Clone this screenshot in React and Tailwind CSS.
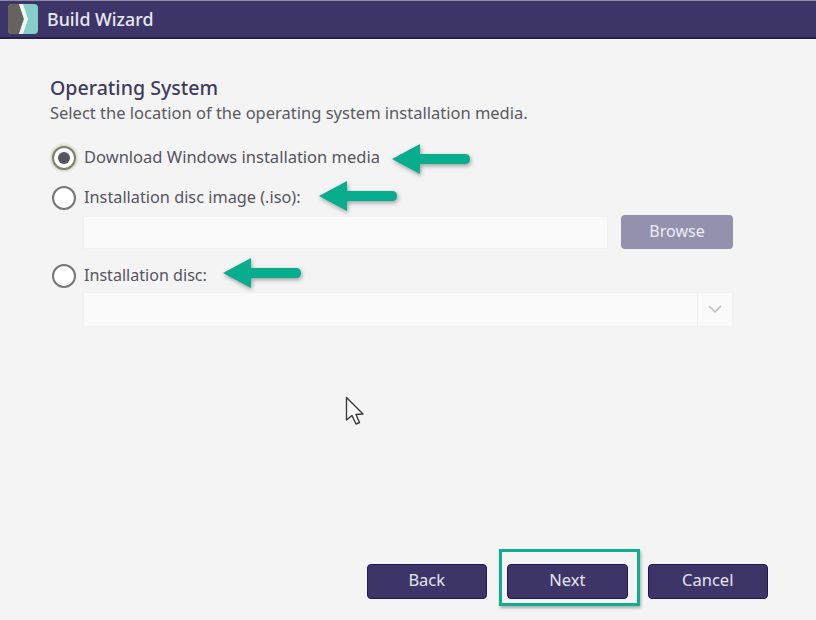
import React from 'react'

const font = { fontFamily: '"Noto Sans", "Open Sans", sans-serif' }

// green annotation arrow, tip on the left
const Arrow = ({ className }) => (
    <svg className={`absolute ${className}`} width="84" height="36" viewBox="0 0 84 36" style={{ filter: 'drop-shadow(1px 2px 2px rgba(0,0,0,0.35))' }}>
        <path d="M2 16 L30 1 L30 11 L75 11 Q80 11 80 16 Q80 21 75 21 L30 21 L30 31 Z" fill="#07ad8c" />
    </svg>
)

const Radio = ({ checked }) => (
    <div className={`w-[24px] h-[24px] rounded-full flex items-center justify-center shrink-0 bg-white border-2 ${checked ? 'border-[#7d7f70] shadow-[0_0_3px_1px_#c9ccab]' : 'border-[#77777b]'}`}>
        {checked && <div className="w-[12px] h-[12px] rounded-full bg-[#55555b]" />}
    </div>
)

const FooterButton = ({ label }) => (
    <button className="w-[120.5px] h-[35px] pb-[3px] rounded-[4px] bg-[#3d3568] border border-[#1e1a50] text-[#e6e6f2] text-[16.5px] leading-[20px]">
        {label}
    </button>
)

const App = () => {
    return (
        <div className="relative w-[816px] h-[620px] overflow-hidden bg-[#f4f4f5] flex flex-col" style={font}>
            <div className="h-[39px] bg-[#3d3568] border-b-2 border-[#26214f] border-t border-t-[#8e8aa2] flex items-center pl-[8px] shrink-0">
                <svg width="30" height="30" viewBox="0 0 30 30">
                    <rect x="0" y="0" width="30" height="30" rx="4" fill="#84cfc8" />
                    <path d="M0 4 Q0 0 4 0 L11 0 L16 15 L11 30 L4 30 Q0 30 0 26 Z" fill="#66625f" />
                    <path d="M11 0 L15 0 L20 15 L15 30 L11 30 L16 15 Z" fill="#f1f5f4" />
                </svg>
                <span className="ml-[9px] text-[17.8px] leading-[24px] text-[#e9e9f4] font-medium">Build Wizard</span>
            </div>

            <div className="pl-[50px] pt-[36px] pr-[83px] flex flex-col">
                <h1 className="text-[19.6px] leading-[26px] font-medium text-[#3f3b5c]">Operating System</h1>
                <p className="text-[16.5px] leading-[22px] mt-[1px] text-[#5a5a62]">Select the location of the operating system installation media.</p>

                <div className="flex items-center gap-[8px] h-[24px] mt-[22px] ml-[2px]">
                    <Radio checked />
                    <span className="text-[16.5px] leading-[20px] pb-[2px] text-[#55555f]">Download Windows installation media</span>
                </div>
                <div className="flex items-center gap-[8px] h-[24px] mt-[16px] ml-[2px]">
                    <Radio />
                    <span className="text-[16.3px] leading-[20px] pb-[2px] text-[#55555f]">Installation disc image (.iso):</span>
                </div>
                <div className="flex items-center gap-[13px] ml-[33px] mt-[5px]">
                    <div className="w-[525px] h-[33px] bg-[#fafafa] border border-[#f1f1f1]" />
                    <button className="w-[112px] h-[34px] pb-[3px] rounded-[4px] bg-[#9391ad] text-[#eeeef5] text-[16px] leading-[20px]">Browse</button>
                </div>
                <div className="flex items-center gap-[8px] h-[24px] mt-[15px] ml-[2px]">
                    <Radio />
                    <span className="text-[16.1px] leading-[20px] pb-[2px] text-[#55555f]">Installation disc:</span>
                </div>
                <div className="flex ml-[33px] mt-[4px] w-[650px] h-[35px] bg-[#fafafa] border border-[#f1f1f1]">
                    <div className="flex-1" />
                    <div className="w-[35px] border-l border-[#eeeeee] flex items-center justify-center">
                        <svg width="14" height="9" viewBox="0 0 14 9" fill="none" stroke="#bdbdc2" strokeWidth="1.5">
                            <path d="M1 1 L7 7 L13 1" />
                        </svg>
                    </div>
                </div>
            </div>

            <div className="flex-1" />
            <div className="flex justify-end gap-[20px] pr-[48px] pb-[21px]">
                <FooterButton label="Back" />
                <FooterButton label="Next" />
                <FooterButton label="Cancel" />
            </div>

            {/* annotations over the dialog */}
            <Arrow className="left-[390px] top-[143px]" />
            <Arrow className="left-[317px] top-[180px]" />
            <Arrow className="left-[221px] top-[257px]" />
            <div className="absolute left-[499px] top-[549px] w-[141px] h-[57px] border-[3px] border-[#10ad8e] shadow-[1px_2px_3px_rgba(0,0,0,0.3)]" />

            <svg className="absolute left-[345px] top-[396px]" width="20" height="32" viewBox="0 0 20 32">
                <path d="M1.5 1.5 L1.5 24 L7 19.5 L11 28 L14.5 26.5 L11 18.5 L18 18 Z" fill="#fafafa" stroke="#3a3a3a" strokeWidth="1.4" strokeLinejoin="round" />
            </svg>
        </div>
    )
}

export default App
